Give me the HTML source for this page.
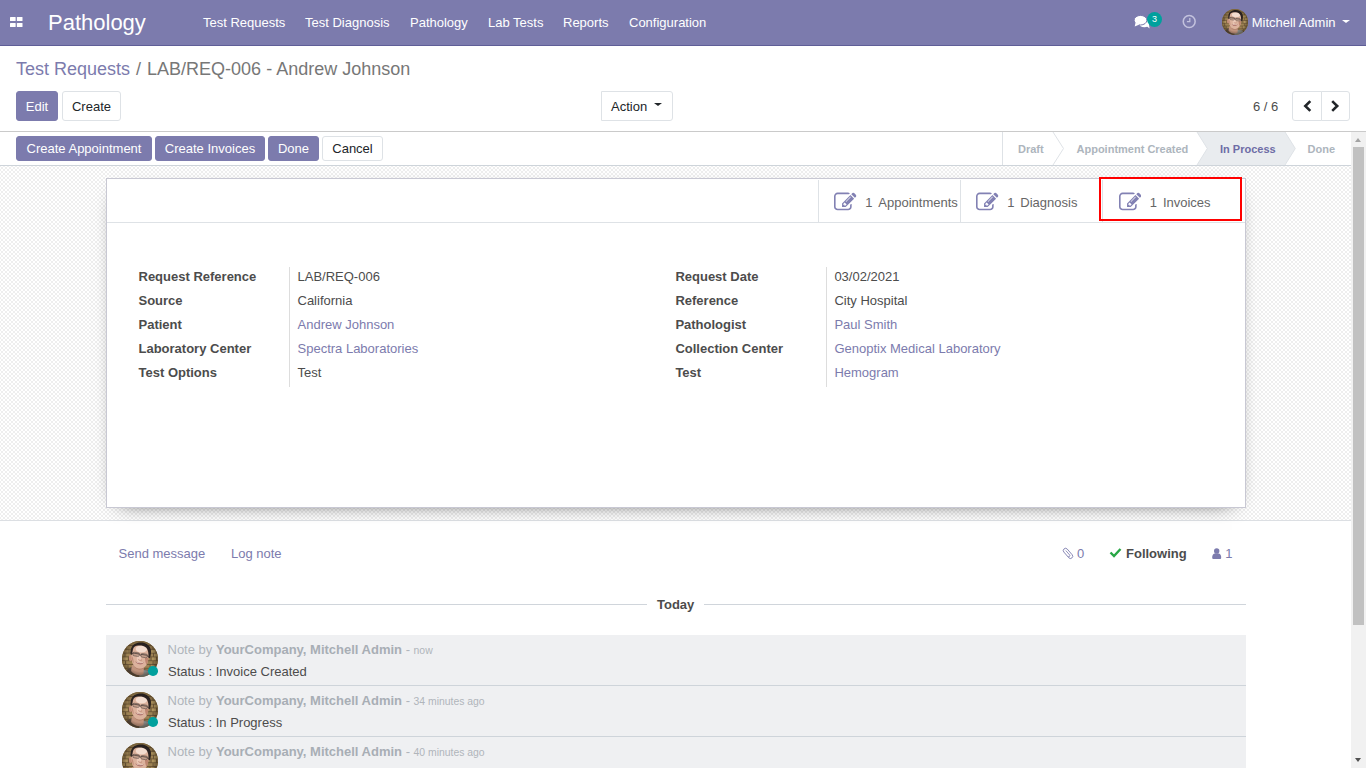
<!DOCTYPE html>
<html lang="en">
<head>
<meta charset="utf-8">
<title>Odoo - LAB/REQ-006 - Andrew Johnson</title>
<style>
*{box-sizing:border-box;}
html,body{margin:0;padding:0;}
body{width:1366px;height:768px;overflow:hidden;position:relative;background:#fff;
  font-family:"Liberation Sans",sans-serif;font-size:13px;line-height:1.5;color:#4c4c4c;}
a{text-decoration:none;color:#7c7bad;}
.abs{position:absolute;}
svg{display:block;}
/* NAVBAR */
#nav{position:absolute;left:0;top:0;width:1366px;height:46px;background:#7c7bad;border-bottom:1px solid #5f5e97;color:#fff;}
#nav .brand{position:absolute;left:48px;top:0;height:45px;line-height:45px;font-size:22px;color:#fff;}
#nav .mi{position:absolute;top:0;height:45px;line-height:45px;font-size:13px;color:#fff;white-space:nowrap;}
/* CONTROL PANEL */
#cp{position:absolute;left:0;top:46px;width:1366px;height:86px;background:#fff;border-bottom:1px solid #cacaca;}
.bc{position:absolute;left:16px;top:12px;font-size:18px;line-height:22px;white-space:nowrap;color:#777;}
.bc a{color:#7c7bad;}
.bc .sep{padding:0 6px;color:#777;}
.btn{position:absolute;border:1px solid transparent;border-radius:3px;font-size:13px;text-align:center;white-space:nowrap;}
.btn-p{background:#7c7bad;border-color:#7c7bad;color:#fff;}
.btn-s{background:#fff;border-color:#dee2e6;color:#212529;}
/* STATUSBAR */
#sb{position:absolute;left:0;top:132px;width:1351px;height:34px;background:#fff;border-bottom:1px solid #ced4da;}
#sb .btn{height:25px;line-height:23px;top:4px;}
.st{position:absolute;top:0;height:33px;line-height:35px;font-size:11px;font-weight:bold;color:#adb5bd;white-space:nowrap;}
/* CONTENT */
#bg{position:absolute;left:0;top:166px;width:1351px;height:355px;
  background-color:#fff;
  background-image:repeating-conic-gradient(#eeeeee 0 25%,#fff 0 50%);
  background-size:4px 4px;background-position:-1px 1px;border-bottom:1px solid #dcdfe3;}
#sheet{position:absolute;left:106px;top:178px;width:1140px;height:330px;background:#fff;border:1px solid #c8c8d3;box-shadow:0 6px 20px -14px #000;}
.bb{position:absolute;top:1px;height:43px;width:142px;border-left:1px solid #dee2e6;border-bottom:1px solid #dee2e6;}
.bb svg{position:absolute;left:15px;top:10.600px;}
.bb span{position:absolute;top:1px;line-height:43px;height:43px;color:#666;white-space:nowrap;}
.lbl{position:absolute;font-weight:bold;color:#4c4c4c;white-space:nowrap;line-height:20px;height:20px;}
.val{position:absolute;white-space:nowrap;line-height:20px;height:20px;}
/* CHATTER */
.ct{position:absolute;white-space:nowrap;line-height:20px;height:20px;}
.msg{position:absolute;left:106px;width:1140px;height:51px;background:#eff0f2;border-bottom:1px solid #ced4da;}
.msg .av{position:absolute;left:16px;top:6px;width:36px;height:36px;}
.msg .dot{position:absolute;left:42.300px;top:31.400px;width:9.600px;height:9.600px;border-radius:50%;background:#00a09d;}
.msg .hd{position:absolute;left:61.500px;top:5px;line-height:20px;color:#b0b5bb;white-space:nowrap;}
.msg .hd b{color:#a8aeb5;}
.msg .hd small{font-size:10.4px;}
.msg .bd{position:absolute;left:62px;top:27px;line-height:20px;color:#4c4c4c;white-space:nowrap;}
/* SCROLLBAR */
#scr{position:absolute;left:1351px;top:132px;width:15px;height:636px;background:#f1f1f1;}
#scr .th{position:absolute;left:2px;top:15px;width:11px;height:478px;background:#c1c1c1;}
</style>
</head>
<body>
<svg width="0" height="0" style="position:absolute">
 <defs>
  <symbol id="edit" viewBox="0 0 1792 1792"><path d="M888 1184l116-116-152-152-116 116v56h96v96h56zm440-720q-16-16-33 1l-350 350q-17 17-1 33t33-1l350-350q17-17 1-33zm80 594v190q0 119-84.500 203.500t-203.500 84.500h-832q-119 0-203.500-84.500t-84.500-203.500v-832q0-119 84.500-203.500t203.500-84.500h832q63 0 117 25 15 7 18 23 3 17-9 29l-49 49q-14 14-32 8-23-6-45-6h-832q-66 0-113 47t-47 113v832q0 66 47 113t113 47h832q66 0 113-47t47-113v-126q0-13 9-22l64-64q15-15 35-7t20 29zm-96-738l288 288-672 672h-288v-288zm444 132l-92 92-288-288 92-92q28-28 68-28t68 28l152 152q28 28 28 68t-28 68z"/></symbol>
  <symbol id="ava" viewBox="0 0 36 36">
    <clipPath id="avc"><circle cx="18" cy="18" r="18"/></clipPath>
    <filter id="avb" x="-10%" y="-10%" width="120%" height="120%"><feGaussianBlur stdDeviation="0.6"/></filter>
    <radialGradient id="avv" cx="50%" cy="48%" r="52%"><stop offset="0.7" stop-color="#000" stop-opacity="0"/><stop offset="1" stop-color="#2a1c08" stop-opacity=".45"/></radialGradient>
    <g clip-path="url(#avc)">
      <rect width="36" height="36" fill="#9a7f50"/>
      <g filter="url(#avb)">
      <rect x="-2" y="-2" width="40" height="40" fill="#9d8253"/>
      <g stroke="#6a5535" stroke-width=".9" fill="none">
        <path d="M0 4.500h36M0 8.300h36M0 12.100h36M0 15.900h36M0 19.700h36M0 23.500h36M0 27.300h36M0 31.100h36"/>
        <path d="M4 4.500v3.800M31 4.500v3.800M7 8.300v3.800M28.500 8.300v3.800M34 8.300v3.800M3 12.100v3.800M31.500 12.100v3.800M6.500 15.900v3.800M29 15.900v3.800M34.500 15.900v3.800M3.500 19.700v3.800M31 19.700v3.800M6 23.500v3.800M28 23.500v3.800M33 23.500v3.800M30 27.300v3.800"/>
      </g>
      <g fill="#b0955f"><rect x="29.500" y="9" width="4" height="2.600"/><rect x="32" y="12.800" width="3.500" height="2.600"/><rect x="30" y="16.600" width="4" height="2.600"/><rect x="29" y="24.200" width="3.500" height="2.600"/><rect x="1" y="16.600" width="4.500" height="2.600"/><rect x="1" y="20.400" width="2" height="2.600"/></g>
      <!-- shoulders -->
      <path d="M1 36C3 29 7 26.500 12 25.500L20 28L27 29C30 30 32 33 33 36Z" fill="#5e4f43"/>
      <path d="M19 29L27.500 29.500C29.500 31 30.500 33.500 31 36L17 36Z" fill="#8b8e8c"/>
      <!-- neck -->
      <path d="M10 24L22 25L21.500 33C18 35.500 12 34 9 30Z" fill="#c0937d"/>
      <!-- ear -->
      <ellipse cx="8.500" cy="17" rx="1.600" ry="3.200" fill="#c48f78"/>
      <!-- face -->
      <path d="M9.500 9C10 5.500 14 3.600 18.500 3.800C23.500 4.100 26.800 7 26.800 12C26.800 16 26.500 19.500 25 23C23.500 26 20.500 28 17.500 27.800C14 27.500 11.500 25 10.300 21.500C9.300 18 9.200 13 9.500 9Z" fill="#dcb29d"/>
      <!-- forehead highlight -->
      <ellipse cx="19.500" cy="8" rx="5.800" ry="3.400" fill="#f3dccf"/>
      <ellipse cx="17" cy="17.500" rx="2.200" ry="3.500" fill="#ecc9b8"/>
      <!-- cheek shadows -->
      <path d="M23 17C25 17 26.300 16.500 26.500 15.500C26.500 19 26 21.500 24.500 23.800C23.500 22 23 19.500 23 17Z" fill="#bd8670"/>
      <path d="M9.800 15C11 16 11.500 19 11.800 22.500C10.500 21 9.600 18 9.800 15Z" fill="#c08b76"/>
      <!-- hair -->
      <path d="M8.800 13.500C7.800 8 10 3 16 1.700C22 .6 27.300 3 28.600 8C29.300 11 29 14.500 27.800 17.200L26.400 16.500C26.800 12.500 26.300 9 24.300 6.800C22.500 5 19.500 4.500 16.500 4.600C13.500 4.700 11.500 5.800 10.900 8.500C10.400 10.500 10.300 12.200 10.100 13.800Z" fill="#2a2220"/>
      <!-- glasses -->
      <g fill="#5a4a44" fill-opacity=".18" stroke="#4a3f3b" stroke-width=".5">
        <rect x="11" y="11.500" width="6.300" height="3.600" rx="1.200" transform="rotate(9 14 13.300)"/>
        <rect x="19" y="12.800" width="6.300" height="3.600" rx="1.200" transform="rotate(9 22 14.600)"/>
      </g>
      <path d="M8.200 12L11 12.500M17.300 13.900L19 14.200M25.300 15.500L27.800 16M10.800 12L17.600 13.100M18.800 13.300L25.600 14.400" stroke="#3d3330" stroke-width=".7" fill="none"/>
      <!-- nose shadow -->
      <path d="M16.300 18.600C17.500 19.500 18.800 19.500 19.900 18.900" stroke="#b9826f" stroke-width=".9" fill="none"/>
      <!-- mouth -->
      <path d="M13.300 20.600C15.500 23.900 19.500 24.100 22 21.400C19.500 22.300 16 22 13.300 20.600Z" fill="#9a5550"/>
      <path d="M14.500 21.300C16.500 22.100 19.300 22.200 20.800 21.700" stroke="#eedcd4" stroke-width=".7" fill="none"/>
      <!-- chin shadow -->
      <path d="M12.500 25.500C15 28.500 20 28.800 23.500 25.500C21 29.500 14.500 29.500 12.500 25.500Z" fill="#a97862"/>
      </g>
      <rect width="36" height="36" fill="url(#avv)"/>
    </g>
  </symbol>
 </defs>
</svg>

<div id="nav">
  <svg class="abs" style="left:10px;top:17px" width="13" height="11" viewBox="0 0 13 11"><g fill="#fff"><rect x="0" y="0" width="5.650" height="3.950" rx=".5"/><rect x="6.850" y="0" width="5.650" height="3.950" rx=".5"/><rect x="0" y="6" width="5.650" height="3.950" rx=".5"/><rect x="6.850" y="6" width="5.650" height="3.950" rx=".5"/></g></svg>
  <div class="brand">Pathology</div>
  <div class="mi" style="left:203px">Test Requests</div>
  <div class="mi" style="left:305px">Test Diagnosis</div>
  <div class="mi" style="left:410px">Pathology</div>
  <div class="mi" style="left:488px">Lab Tests</div>
  <div class="mi" style="left:563px">Reports</div>
  <div class="mi" style="left:629px">Configuration</div>
  <!-- chat icon -->
  <svg class="abs" style="left:1133px;top:14px" width="18" height="16" viewBox="0 0 18 16"><g fill="#fff"><ellipse cx="11.300" cy="9.400" rx="5.200" ry="3.900"/><path d="M13.500 12L16.600 14.400L15.900 10.500Z"/><g stroke="#7c7bad" stroke-width="1"><ellipse cx="7.500" cy="6.200" rx="6.400" ry="4.800"/></g><path d="M2.600 8.500L1.700 12.400L6.500 10.600Z"/></g></svg>
  <div class="abs" style="left:1147px;top:12px;width:15px;height:15px;border-radius:8px;background:#00a09d;color:#fff;font-size:9px;line-height:15px;text-align:center;">3</div>
  <!-- clock -->
  <svg class="abs" style="left:1182px;top:14px" width="15" height="15" viewBox="0 0 15 15"><circle cx="7.200" cy="7.500" r="5.950" fill="none" stroke="#c3c2dd" stroke-width="1.550"/><path d="M7.800 4V7.700H4.900" fill="none" stroke="#c3c2dd" stroke-width="1.250"/></svg>
  <svg class="abs" style="left:1222px;top:9px" width="26" height="26"><use href="#ava"/></svg>
  <div class="mi" style="left:1251.700px">Mitchell Admin</div>
  <div class="abs" style="left:1342px;top:19.700px;width:0;height:0;border-left:4px solid transparent;border-right:4px solid transparent;border-top:3.600px solid #fff;"></div>
</div>

<div id="cp">
  <div class="bc"><a>Test Requests</a><span class="sep">/</span>LAB/REQ-006 - Andrew Johnson</div>
  <div class="btn btn-p" style="left:16px;top:45px;width:42px;height:30px;line-height:30px;">Edit</div>
  <div class="btn btn-s" style="left:62px;top:45px;width:59px;height:30px;line-height:30px;">Create</div>
  <div class="btn btn-s" style="left:601px;top:45px;width:72px;height:30px;line-height:30px;text-align:left;padding-left:9px;border-radius:0 3px 3px 0;">Action</div>
  <div class="abs" style="left:654px;top:57px;width:0;height:0;border-left:4px solid transparent;border-right:4px solid transparent;border-top:3.5px solid #212529;"></div>
  <div class="abs" style="left:1253px;top:51px;line-height:20px;color:#4c4c4c;">6 / 6</div>
  <div class="btn btn-s" style="left:1292px;top:45px;width:30px;height:30px;border-radius:3px 0 0 3px;"></div>
  <div class="btn btn-s" style="left:1321px;top:45px;width:29px;height:30px;border-radius:0 3px 3px 0;"></div>
  <svg class="abs" style="left:1302px;top:54px" width="11" height="12" viewBox="0 0 11 12"><path d="M8.300 1.100L3.300 6l5 4.900" fill="none" stroke="#212529" stroke-width="2.600"/></svg>
  <svg class="abs" style="left:1330px;top:54px" width="11" height="12" viewBox="0 0 11 12"><path d="M2.200 1.100L7.200 6l-5 4.900" fill="none" stroke="#212529" stroke-width="2.600"/></svg>
</div>

<div id="sb">
  <div class="btn btn-p" style="left:16px;width:136px;">Create Appointment</div>
  <div class="btn btn-p" style="left:155px;width:110px;">Create Invoices</div>
  <div class="btn btn-p" style="left:268px;width:51px;">Done</div>
  <div class="btn btn-s" style="left:322px;width:61px;">Cancel</div>
  <svg class="abs" style="left:1002px;top:0" width="349" height="33" viewBox="0 0 349 33">
    <path d="M.5 0V33" stroke="#dee2e6" fill="none"/>
    <path d="M195 0H283L293.300 16.500L283 33H195L205.300 16.500Z" fill="#e9ecef"/>
    <g stroke="#dee2e6" fill="none" stroke-width="1">
      <path d="M51 0L61.500 16.500L51 33"/>
      <path d="M195 0L205.300 16.500L195 33"/>
      <path d="M283 0L293.300 16.500L283 33"/>
    </g>
  </svg>
  <div class="st" style="left:1018px">Draft</div>
  <div class="st" style="left:1076.500px">Appointment Created</div>
  <div class="st" style="left:1220px;color:#6e6da6">In Process</div>
  <div class="st" style="left:1307.600px">Done</div>
</div>

<div id="bg"></div>
<div id="sheet">
  <div class="bb" style="left:711px"><svg width="22.500" height="22.500" fill="#8281b3"><use href="#edit"/></svg><span style="left:46.200px">1</span><span style="left:59.300px">Appointments</span></div>
  <div class="bb" style="left:853px"><svg width="22.500" height="22.500" fill="#8281b3"><use href="#edit"/></svg><span style="left:46.200px">1</span><span style="left:59.300px">Diagnosis</span></div>
  <div class="bb" style="left:995px;width:143px"><svg style="left:15.500px" width="22.500" height="22.500" fill="#8281b3"><use href="#edit"/></svg><span style="left:46.800px">1</span><span style="left:59.900px">Invoices</span></div>
  <div class="abs" style="left:0;top:43px;width:712px;height:1px;background:#dee2e6"></div>

  <div class="abs" style="left:182px;top:88px;width:1px;height:120px;background:#ddd"></div>
  <div class="abs" style="left:719px;top:88px;width:1px;height:120px;background:#ddd"></div>

  <div class="lbl" style="left:31.500px;top:88px">Request Reference</div><div class="val" style="left:190.500px;top:88px">LAB/REQ-006</div>
  <div class="lbl" style="left:31.500px;top:112px">Source</div><div class="val" style="left:190.500px;top:112px">California</div>
  <div class="lbl" style="left:31.500px;top:136px">Patient</div><div class="val" style="left:190.500px;top:136px"><a>Andrew Johnson</a></div>
  <div class="lbl" style="left:31.500px;top:160px">Laboratory Center</div><div class="val" style="left:190.500px;top:160px"><a>Spectra Laboratories</a></div>
  <div class="lbl" style="left:31.500px;top:184px">Test Options</div><div class="val" style="left:190.500px;top:184px">Test</div>

  <div class="lbl" style="left:568.400px;top:88px">Request Date</div><div class="val" style="left:727.400px;top:88px">03/02/2021</div>
  <div class="lbl" style="left:568.400px;top:112px">Reference</div><div class="val" style="left:727.400px;top:112px">City Hospital</div>
  <div class="lbl" style="left:568.400px;top:136px">Pathologist</div><div class="val" style="left:727.400px;top:136px"><a>Paul Smith</a></div>
  <div class="lbl" style="left:568.400px;top:160px">Collection Center</div><div class="val" style="left:727.400px;top:160px"><a>Genoptix Medical Laboratory</a></div>
  <div class="lbl" style="left:568.400px;top:184px">Test</div><div class="val" style="left:727.400px;top:184px"><a>Hemogram</a></div>
</div>
<!-- red highlight -->
<div class="abs" style="left:1099px;top:177px;width:143px;height:44px;border:2px solid #f00;"></div>

<!-- CHATTER -->
<div class="ct" style="left:118.500px;top:544px;color:#7c7bad">Send message</div>
<div class="ct" style="left:231px;top:544px;color:#7c7bad">Log note</div>
<svg class="abs" style="left:1062px;top:547px" width="13" height="13" viewBox="0 0 13 13"><g fill="none" stroke="#7c7bad" transform="translate(6 6.400) rotate(-41)"><rect x="-2.250" y="-6" width="4.500" height="12" rx="2.250" stroke-width=".85"/><path d="M.2 -3.600V2.200A1.100 1.100 0 0 1 -2 2.200" stroke-width=".9" opacity=".85"/></g></svg>
<div class="ct" style="left:1077px;top:544px;color:#7c7bad">0</div>
<svg class="abs" style="left:1109px;top:547.300px" width="13" height="11" viewBox="0 0 13 11"><path d="M1.500 5.500L5 9L11.500 2" fill="none" stroke="#28a745" stroke-width="2.400"/></svg>
<div class="ct" style="left:1126px;top:544px;font-weight:bold;color:#4c4c4c">Following</div>
<svg class="abs" style="left:1212px;top:548px" width="10" height="12" viewBox="0 0 10 12"><circle cx="4.700" cy="2.900" r="2.700" fill="#7c7bad"/><path d="M.2 9.800C.2 6.500 1.500 5.300 4.700 5.300S9.200 6.500 9.200 9.800C9.200 10.600 8.600 11 7.800 11H1.600C.8 11 .2 10.600 .2 9.800Z" fill="#7c7bad"/></svg>
<div class="ct" style="left:1225.300px;top:544px;color:#7c7bad">1</div>

<div class="abs" style="left:106px;top:604px;width:541px;height:1px;background:#d0d5db"></div>
<div class="abs" style="left:704px;top:604px;width:542px;height:1px;background:#d0d5db"></div>
<div class="ct" style="left:657px;top:595px;font-weight:bold;color:#4c4c4c">Today</div>

<div class="msg" style="top:635px"><svg class="av"><use href="#ava"/></svg><div class="dot"></div>
  <div class="hd">Note by <b>YourCompany, Mitchell Admin</b> - <small>now</small></div><div class="bd">Status : Invoice Created</div></div>
<div class="msg" style="top:686px"><svg class="av"><use href="#ava"/></svg><div class="dot"></div>
  <div class="hd">Note by <b>YourCompany, Mitchell Admin</b> - <small>34 minutes ago</small></div><div class="bd">Status : In Progress</div></div>
<div class="msg" style="top:737px"><svg class="av"><use href="#ava"/></svg><div class="dot"></div>
  <div class="hd">Note by <b>YourCompany, Mitchell Admin</b> - <small>40 minutes ago</small></div><div class="bd">Status : Done</div></div>

<div id="scr"><div class="th"></div>
  <div class="abs" style="left:4px;top:6px;width:0;height:0;border-left:3.500px solid transparent;border-right:3.500px solid transparent;border-bottom:4px solid #a3a3a3;"></div>
  <div class="abs" style="left:4px;top:626px;width:0;height:0;border-left:3.500px solid transparent;border-right:3.500px solid transparent;border-top:4px solid #505050;"></div>
</div>
</body>
</html>
